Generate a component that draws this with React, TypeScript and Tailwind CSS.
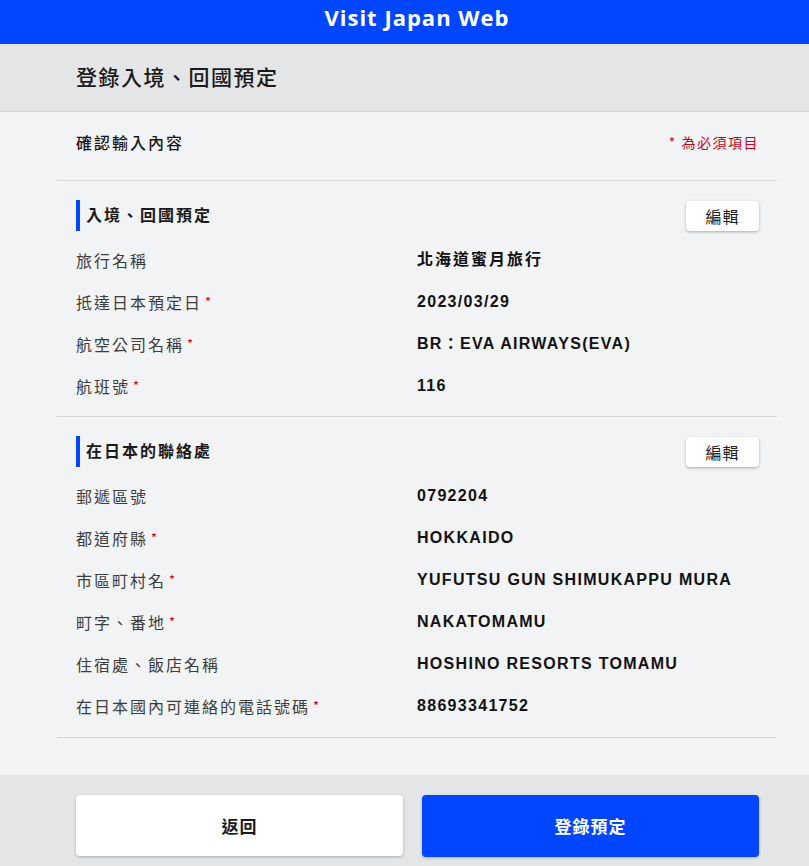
import React from "react";

const CJK = "font-['Noto_Sans_CJK_TC',sans-serif]";
const VALUE_FONT = "font-['Liberation_Sans','Noto_Sans_CJK_TC',sans-serif]";

type Row = { label: string; value: string; required?: boolean; cjk?: boolean };

const TRIP: Row[] = [
  { label: "旅行名稱", value: "北海道蜜月旅行", cjk: true },
  { label: "抵達日本預定日", value: "2023/03/29", required: true },
  { label: "航空公司名稱", value: "BR：EVA AIRWAYS(EVA)", required: true },
  { label: "航班號", value: "116", required: true },
];

const CONTACT: Row[] = [
  { label: "郵遞區號", value: "0792204" },
  { label: "都道府縣", value: "HOKKAIDO", required: true },
  { label: "市區町村名", value: "YUFUTSU GUN SHIMUKAPPU MURA", required: true },
  { label: "町字、番地", value: "NAKATOMAMU", required: true },
  { label: "住宿處、飯店名稱", value: "HOSHINO RESORTS TOMAMU" },
  { label: "在日本國內可連絡的電話號碼", value: "88693341752", required: true },
];

function Section({ title, rows, pb }: { title: string; rows: Row[]; pb: string }) {
  return (
    <section className={`border-b border-[#d5d6d8] pt-[19px] ${pb} pl-[19px] pr-[18px]`}>
      {/* Section header with edit button */}
      <div className="flex items-center justify-between h-[31px] mb-[8px]">
        <div className="flex items-center h-full">
          <span className="w-[4px] h-full bg-[#0046ff] mr-[6px]" aria-hidden="true" />
          <h2 className={`${CJK} text-[16px] leading-[24px] font-semibold tracking-[2px] text-[#1a1a1a] -mt-[3px]`}>
            {title}
          </h2>
        </div>
        <button
          className={`${CJK} w-[73px] h-[30px] bg-white rounded-[4px] shadow-[0_1px_3px_rgba(0,0,0,0.3)] text-[16px] leading-[24px] tracking-[1px] text-[#222]`}
        >
          編輯
        </button>
      </div>

      {/* Confirmed values */}
      <dl>
        {rows.map((r) => (
          <div key={r.label} className="flex items-center h-[42px]">
            <dt
              className={`${CJK} w-[341px] shrink-0 text-[16px] leading-[24px] tracking-[2px] text-[#3d3d3d]`}
            >
              {r.label}
              {r.required && (
                <span className="text-[#d0021b] text-[13px] ml-[3px] align-top">*</span>
              )}
            </dt>
            <dd
              className={`${VALUE_FONT} text-[16px] leading-[24px] font-bold text-[#111] ${
                r.cjk ? "tracking-[2px]" : "tracking-[1.3px]"
              }`}
            >
              {r.value}
            </dd>
          </div>
        ))}
      </dl>
    </section>
  );
}

export default function App() {
  return (
    <div className="w-[809px] min-h-[866px] bg-[#f2f3f5] flex flex-col">
      {/* App bar */}
      <header className="h-[44px] bg-[#0046ff] pt-[2px]">
        <div className="ml-[57px] w-[720px] text-center">
          <h1 className="font-['Open_Sans',sans-serif] font-bold text-[22px] leading-[30px] tracking-[1px] text-white">
            Visit Japan Web
          </h1>
        </div>
      </header>

      {/* Page title band */}
      <div className="h-[68px] bg-[#e4e5e7] border-b border-[#d5d6d8] flex items-center pl-[76px] pb-[3px]">
        <p className={`${CJK} text-[21px] leading-[30px] font-medium tracking-[1.5px] text-[#1a1a1a]`}>
          登錄入境、回國預定
        </p>
      </div>

      {/* Confirmation content */}
      <main className="ml-[57px] w-[720px] pb-[37px]">
        <div className="h-[69px] border-b border-[#d5d6d8] pt-[18px] pl-[19px] pr-[18px] flex justify-between">
          <p className={`${CJK} text-[16px] leading-[24px] font-medium tracking-[2px] text-[#1a1a1a]`}>
            確認輸入內容
          </p>
          <p className={`${CJK} text-[14px] leading-[24px] tracking-[1.5px] text-[#d0021b]`}>
            * 為必須項目
          </p>
        </div>

        <Section title="入境、回國預定" rows={TRIP} pb="pb-[9px]" />
        <Section title="在日本的聯絡處" rows={CONTACT} pb="pb-[10px]" />
      </main>

      {/* Footer actions */}
      <footer className="flex-1 bg-[#e4e5e7] pt-[20px] pb-[10px]">
        <div className="ml-[76px] flex gap-[19px]">
          <button
            className={`${CJK} w-[327px] h-[61px] bg-white rounded-[4px] shadow-[0_1px_3px_rgba(0,0,0,0.25)] text-[17px] font-bold tracking-[1px] text-[#1a1a1a]`}
          >
            返回
          </button>
          <button
            className={`${CJK} w-[337px] h-[62px] bg-[#0046ff] rounded-[4px] shadow-[0_1px_3px_rgba(0,0,0,0.25)] text-[17px] font-bold tracking-[1px] text-white`}
          >
            登錄預定
          </button>
        </div>
      </footer>
    </div>
  );
}
